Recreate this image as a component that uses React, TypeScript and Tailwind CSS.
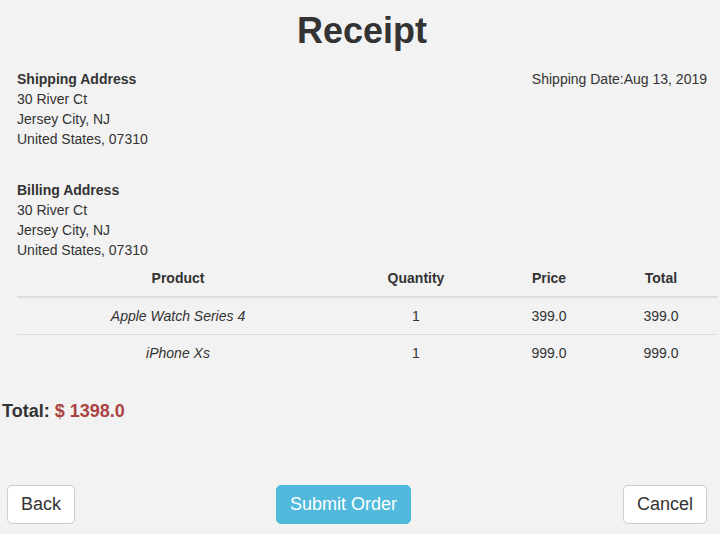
import React from 'react';

const items = [
  { name: 'Apple Watch Series 4', qty: 1, price: '399.0', total: '399.0' },
  { name: 'iPhone Xs', qty: 1, price: '999.0', total: '999.0' },
];

const Address: React.FC<{ title: string }> = ({ title }) => (
  <div className="text-[14px] leading-[20px]">
    <div className="font-bold">{title}</div>
    <div>30 River Ct</div>
    <div>Jersey City, NJ</div>
    <div>United States, 07310</div>
  </div>
);

const App: React.FC = () => {
  return (
    <div className="min-h-[534px] w-[720px] bg-[#f2f2f2] text-[#333] font-['Liberation_Sans',Arial,sans-serif]">
      <h1 className="pt-[11px] text-center text-[36px] leading-[40px] font-bold pl-[4px]">Receipt</h1>

      <div className="px-[17px] pt-[18px]">
        <div className="flex justify-between">
          <Address title="Shipping Address" />
          <div className="text-[14px] leading-[20px] mr-[-4px]">Shipping Date:Aug 13, 2019</div>
        </div>

        <div className="mt-[31px]">
          <Address title="Billing Address" />
        </div>

        <table className="w-[700px] text-[14px] leading-[20px] border-collapse">
          <thead>
            <tr className="border-b-2 border-[#dddddd]">
              <th className="w-[322px] py-[8px] font-bold">Product</th>
              <th className="w-[154px] py-[8px] font-bold">Quantity</th>
              <th className="w-[112px] py-[8px] font-bold">Price</th>
              <th className="w-[112px] py-[8px] font-bold">Total</th>
            </tr>
          </thead>
          <tbody>
            {items.map((it, i) => (
              <tr key={it.name} className={i > 0 ? 'border-t border-[#dddddd]' : ''}>
                <td className="py-[8px] text-center italic">{it.name}</td>
                <td className="py-[8px] text-center">{it.qty}</td>
                <td className="py-[8px] text-center">{it.price}</td>
                <td className="py-[8px] text-center">{it.total}</td>
              </tr>
            ))}
          </tbody>
        </table>
      </div>

      <div className="mt-[30px] pl-[2px] text-[18px] leading-[20px] font-bold">
        Total: <span className="text-[#a94442]">$ 1398.0</span>
      </div>

      <div className="mt-[64px] flex items-center pl-[7px] pr-[13px]">
        <button className="h-[39px] px-[13px] text-[18px] bg-white border border-[#cccccc] rounded-[5px] text-[#333]">
          Back
        </button>
        <button className="ml-[201px] h-[39px] px-[13px] text-[18px] bg-[#52b9dc] border border-[#46b8da] rounded-[5px] text-white">
          Submit Order
        </button>
        <button className="ml-auto h-[39px] px-[13px] text-[18px] bg-white border border-[#cccccc] rounded-[5px] text-[#333]">
          Cancel
        </button>
      </div>
    </div>
  );
};

export default App;
